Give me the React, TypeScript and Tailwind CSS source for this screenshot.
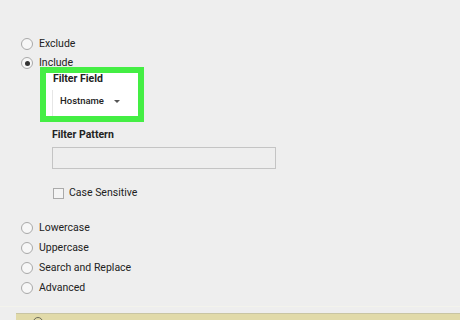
import React from "react";

function Radio({ checked = false }: { checked?: boolean }) {
  return (
    <span className="flex h-[12px] w-[12px] shrink-0 items-center justify-center rounded-full border border-[#a9a9a9] bg-[#f7f7f7]">
      {checked && <span className="h-[5px] w-[5px] rounded-full bg-[#333333]" />}
    </span>
  );
}

function RadioRow({ label, checked = false }: { label: string; checked?: boolean }) {
  return (
    <div className="flex h-[20px] items-center pl-[21px]">
      <Radio checked={checked} />
      <span className="ml-[6px] leading-[12px]">{label}</span>
    </div>
  );
}

export default function App() {
  return (
    <div
      className="relative h-[320px] w-[460px] overflow-hidden bg-[#eeeeee] text-[10.5px] text-[#222222]"
      style={{ fontFamily: "Roboto, 'Liberation Sans', sans-serif" }}
    >
      <div className="h-[35px]" />
      <div className="flex h-[18px] items-center pl-[21px]">
        <Radio />
        <span className="ml-[6px] leading-[12px]">Exclude</span>
      </div>
      <div className="flex h-[20px] items-center pl-[21px]">
        <Radio checked />
        <span className="ml-[6px] leading-[12px]">Include</span>
      </div>

      <div className="ml-[40px] mt-[-6px] flex h-[55px] w-[104px] flex-col border-[6px] border-[#44ee44] bg-white">
        <div className="pl-[7px] font-bold leading-[12px]">Filter Field</div>
        <div className="ml-[6px] mt-[5px] flex flex-1 items-center border-l border-[#e6e6e6] pb-[4px] pl-[7px]">
          <span className="text-[9.5px] font-medium leading-[12px]">Hostname</span>
          <svg className="ml-[10px] mt-[2px]" width="6" height="4" viewBox="0 0 6 4">
            <path d="M0 0 L6 0 L3 3 Z" fill="#555555" />
          </svg>
        </div>
      </div>

      <div className="ml-[52px] mt-[7px] font-bold leading-[12px]">Filter Pattern</div>
      <div className="ml-[52px] mt-[6px] h-[22px] w-[224px] border border-[#c4c4c4] bg-[#eeeeee]" />

      <div className="ml-[53px] mt-[18px] flex h-[12px] items-center">
        <span className="h-[11px] w-[11px] border border-[#aaaaaa] bg-[#f4f4f4]" />
        <span className="ml-[5px] leading-[12px]">Case Sensitive</span>
      </div>

      <div className="h-[19px]" />
      <RadioRow label="Lowercase" />
      <RadioRow label="Uppercase" />
      <RadioRow label="Search and Replace" />
      <RadioRow label="Advanced" />

      <div className="mt-[8px] h-px w-full bg-[#f3f3ec]" />
      <div className="relative ml-[16px] mt-[6px] h-[10px] border-t border-[#c9c5a3] bg-[#e1daa9]">
        <span className="absolute left-[17px] top-[3px] h-[10px] w-[10px] rounded-full border border-[#6a6a5a]" />
      </div>
    </div>
  );
}
